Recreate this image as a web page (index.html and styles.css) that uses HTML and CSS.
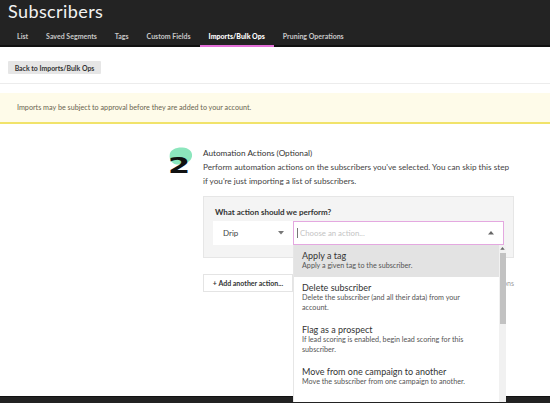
FILE: index.html
```html
<!DOCTYPE html>
<html lang="en">
<head>
<meta charset="utf-8">
<title>Subscribers</title>
<link rel="stylesheet" href="styles.css">
</head>
<body>
<header class="topbar">
  <h1 class="title">Subscribers</h1>
  <nav class="tabs">
    <a class="tab">List</a>
    <a class="tab">Saved Segments</a>
    <a class="tab">Tags</a>
    <a class="tab">Custom Fields</a>
    <a class="tab active">Imports/Bulk Ops</a>
    <a class="tab">Pruning Operations</a>
  </nav>
</header>
<main class="main">
  <div class="toolbar">
    <button class="back-btn">Back to Imports/Bulk Ops</button>
  </div>
  <div class="notice">Imports may be subject to approval before they are added to your account.</div>
  <section class="step">
    <div class="step-num">
      <svg class="blob" viewBox="0 0 30 21" width="26" height="18"><path d="M3 9 C3 3 11 0 18 0.5 C25 1 30 5 29 11 C28 17 21 20 14 20.5 C7 21 2 16 3 9Z" fill="#8ce6bd"/></svg>
      <span class="digit">2</span>
    </div>
    <div class="step-body">
      <div class="step-title">Automation Actions (Optional)</div>
      <p class="step-desc">Perform automation actions on the subscribers you've selected. You can skip this step<br>if you're just importing a list of subscribers.</p>
      <div class="action-box">
        <div class="action-label">What action should we perform?</div>
        <div class="action-row">
          <div class="select">
            <span>Drip</span>
            <svg class="chev" viewBox="0 0 6 4" width="6" height="4"><path d="M0 0 L6 0 L3 3.5Z" fill="#777"/></svg>
          </div>
          <div class="combo">
            <div class="combo-input">
              <span class="caret"></span>
              <span class="placeholder">Choose an action...</span>
              <svg class="chev up" viewBox="0 0 6 4" width="6" height="4"><path d="M0 3.5 L6 3.5 L3 0Z" fill="#666"/></svg>
            </div>
            <div class="dropdown">
              <ul class="options">
                <li class="option hl"><div class="opt-title">Apply a tag</div><div class="opt-desc">Apply a given tag to the subscriber.</div></li>
                <li class="option"><div class="opt-title">Delete subscriber</div><div class="opt-desc">Delete the subscriber (and all their data) from your<br>account.</div></li>
                <li class="option"><div class="opt-title">Flag as a prospect</div><div class="opt-desc">If lead scoring is enabled, begin lead scoring for this<br>subscriber.</div></li>
                <li class="option"><div class="opt-title">Move from one campaign to another</div><div class="opt-desc">Move the subscriber from one campaign to another.</div></li>
              </ul>
              <div class="scrollbar">
                <svg class="scroll-up" viewBox="0 0 6 4" width="5" height="3"><path d="M0 3.5 L6 3.5 L3 0Z" fill="#666"/></svg>
                <div class="thumb"></div>
              </div>
            </div>
          </div>
        </div>
      </div>
      <div class="add-row">
        <button class="add-btn">+ Add another action...</button>
        <span class="side-link">Skip actions</span>
      </div>
    </div>
  </section>
</main>
<footer class="footer"></footer>
</body>
</html>
```
FILE: styles.css
```css
html, body {
  margin: 0;
  padding: 0;
  height: 100%;
  overflow: hidden;
}
body {
  display: flex;
  flex-direction: column;
  font-family: "Lato", "Open Sans", sans-serif;
  background: #fff;
  color: #333;
}
.topbar {
  background: #232323;
  height: 47px;
  display: flex;
  flex-direction: column;
}
.title {
  margin: 0;
  padding-left: 8px;
  font-size: 18px;
  line-height: 22px;
  font-weight: 400;
  color: #f2f2f2;
  letter-spacing: 0.4px;
}
.tabs {
  display: flex;
  margin-top: 6px;
  padding-left: 8px;
  background: #232323;
  box-shadow: inset 0 -2px 0 #111;
}
.tab {
  padding: 0 9px;
  font-size: 7px;
  line-height: 17px;
  font-weight: 700;
  color: #c8c8c8;
  border-bottom: 2px solid transparent;
}
.tab.active {
  color: #fff;
  font-weight: 900;
  border-bottom-color: #e36fd8;
}
.main {
  flex: 1;
  position: relative;
}
.toolbar {
  padding: 14px 8px 9px;
  border-bottom: 1px solid #ececec;
}
.back-btn {
  display: block;
  width: 93px;
  height: 13px;
  padding: 0;
  border: 0;
  background: #e6e6e6;
  font-family: inherit;
  font-size: 6.9px;
  font-weight: 700;
  color: #333;
  border-radius: 1px;
}
.notice {
  margin-top: 9px;
  height: 29px;
  line-height: 29px;
  padding-left: 17px;
  background: #fefbe9;
  border-bottom: 2px solid #f1e36a;
  font-size: 7.2px;
  color: #6a6450;
}
.step {
  display: flex;
  padding-left: 165px;
  margin-top: 23px;
}
.step-num {
  position: relative;
  width: 38px;
  flex: none;
}
.blob {
  position: absolute;
  left: 2px;
  top: 0;
}
.digit {
  position: relative;
  display: block;
  margin-left: 3px;
  margin-top: 8px;
  font-family: "DejaVu Sans", sans-serif;
  font-size: 22px;
  line-height: 22px;
  font-weight: 700;
  color: #111;
  transform: scaleX(1.45);
  transform-origin: left center;
}
.step-body {
  width: 311px;
}
.step-title {
  font-size: 8.2px;
  line-height: 12px;
  color: #333;
}
.step-desc {
  margin: 1px 0 0;
  font-size: 8.2px;
  line-height: 14px;
  color: #444;
  white-space: nowrap;
}
.action-box {
  margin-top: 8px;
  background: #f4f4f4;
  border: 1px solid #e6e6e6;
  padding: 9px 9px 12px 9px;
}
.action-label {
  margin-left: 2px;
  font-size: 8px;
  line-height: 12px;
  font-weight: 700;
  color: #333;
}
.action-row {
  display: flex;
  margin-top: 3px;
  height: 24px;
}
.select {
  width: 80px;
  box-sizing: border-box;
  background: #fff;
  display: flex;
  align-items: center;
  justify-content: space-between;
  padding: 0 9px 0 10px;
  font-size: 8px;
  color: #444;
}
.combo {
  position: relative;
  flex: 1;
}
.combo-input {
  height: 24px;
  box-sizing: border-box;
  border: 1px solid #e4a8e0;
  background: #fff;
  display: flex;
  align-items: center;
  padding: 0 9px 0 3px;
}
.caret {
  width: 1px;
  height: 10px;
  background: #777;
  margin-right: 2px;
}
.placeholder {
  flex: 1;
  font-size: 7.8px;
  color: #c4c4c4;
}
.dropdown {
  position: absolute;
  left: 0;
  top: 24px;
  width: 212px;
  height: 157px;
  background: #fff;
  border-left: 1px solid #e6e6e6;
  display: flex;
  z-index: 5;
}
.options {
  list-style: none;
  margin: 0;
  padding: 0;
  flex: 1;
  overflow: hidden;
}
.option {
  padding: 5px 8px 6px 8px;
}
.option.hl {
  background: #e3e3e3;
}
.opt-title {
  font-size: 9px;
  line-height: 11px;
  color: #333;
}
.opt-desc {
  font-size: 7.2px;
  line-height: 10px;
  color: #555;
}
.scrollbar {
  width: 7px;
  background: #f1f1f1;
  display: flex;
  flex-direction: column;
  align-items: center;
}
.scroll-up {
  margin-top: 2px;
}
.thumb {
  margin-top: 3px;
  width: 6px;
  height: 71px;
  background: #c2c2c2;
}
.add-row {
  margin-top: 16px;
  display: flex;
  justify-content: space-between;
  align-items: center;
}
.add-btn {
  width: 90px;
  height: 18px;
  padding: 0;
  background: #fff;
  border: 1px solid #e4e4e4;
  font-family: inherit;
  font-size: 7px;
  font-weight: 700;
  color: #333;
}
.side-link {
  font-size: 7px;
  color: #999;
}
.footer {
  height: 6px;
  background: #222;
  border-top: 1px solid #111;
  flex: none;
}
```
